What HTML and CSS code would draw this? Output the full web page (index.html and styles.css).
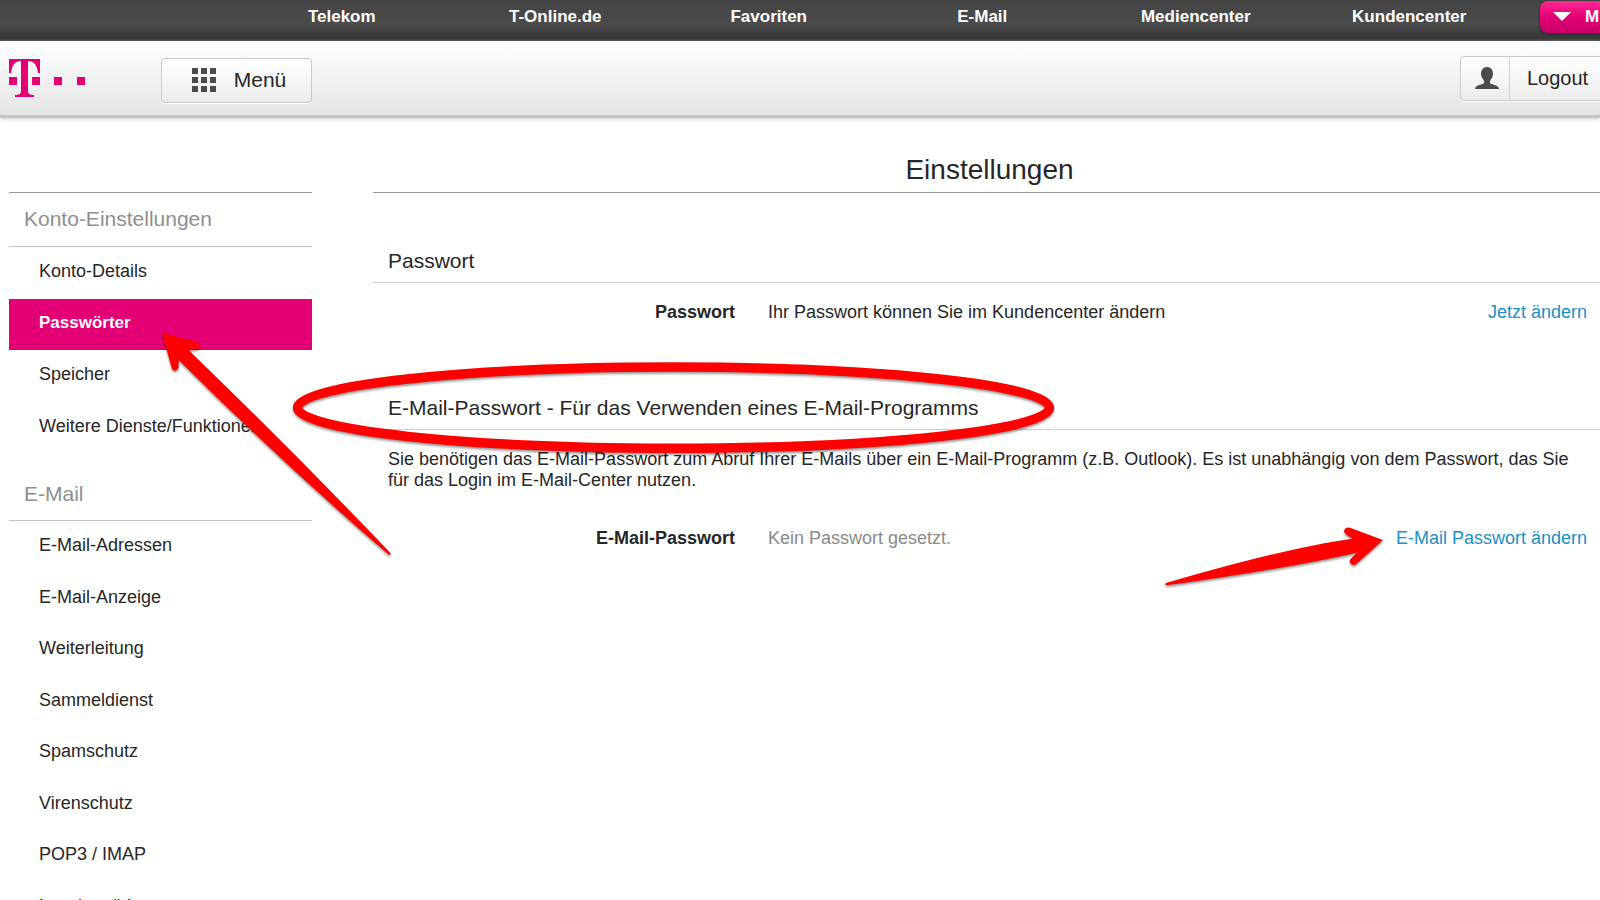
FILE: index.html
```html
<!DOCTYPE html>
<html lang="de">
<head>
    <meta charset="UTF-8">
    <meta name="viewport" content="width=device-width, initial-scale=1.0">
    <title>Einstellungen</title>
    <link rel="stylesheet" href="styles.css">
</head>
<body>
    <nav class="topbar">
        <a href="#">Telekom</a>
        <a href="#">T-Online.de</a>
        <a href="#">Favoriten</a>
        <a href="#">E-Mail</a>
        <a href="#">Mediencenter</a>
        <a href="#">Kundencenter</a>
        <button class="more">
            <svg width="18" height="10" viewBox="0 0 18 10"><path d="M0 0H18L9 9Z" fill="#fff"/></svg>
            <span>M</span>
        </button>
    </nav>
    <header class="header">
        <a href="#" class="logo" aria-label="Telekom">
            <svg width="77" height="39" viewBox="0 0 77 39" fill="#e20074">
                <path d="M0 0H31V14H29C28 6 25 2 19 2V32C19 35 21 36 25 36V38H6V36C10 36 12 35 12 32V2C6 2 3 6 2 14H0Z"/>
                <path d="M0 18H8V26H0ZM23 18H31V26H23ZM45 18H53V26H45ZM68 18H76V26H68Z"/>
            </svg>
        </a>
        <button class="btn menu-btn">
            <svg width="25" height="25" viewBox="0 0 25 25" fill="#4b4b4b">
                <path d="M0 0H6V6H0ZM9 0H15V6H9ZM18 0H24V6H18ZM0 9H6V15H0ZM9 9H15V15H9ZM18 9H24V15H18ZM0 18H6V24H0ZM9 18H15V24H9ZM18 18H24V24H18Z"/>
            </svg>
            <span>Menü</span>
        </button>
        <div class="account">
            <button class="btn user-btn" aria-label="Benutzer">
                <svg width="24" height="22" viewBox="0 0 24 22" fill="#4b4b4b">
                    <path d="M12 0C16 0 18 3 18 7C18 10 16 12 15 14V16C17 18 24 18 24 22H0C0 18 7 18 9 16V14C8 12 6 10 6 7C6 3 8 0 12 0Z"/>
                </svg>
            </button>
            <button class="btn logout-btn">Logout</button>
        </div>
    </header>

    <div class="page">
        <aside class="sidebar">
            <h2 class="first">Konto-Einstellungen</h2>
            <ul class="konto">
                <li><a href="#">Konto-Details</a></li>
                <li class="active"><a href="#">Passwörter</a></li>
                <li><a href="#">Speicher</a></li>
                <li><a href="#">Weitere Dienste/Funktionen</a></li>
            </ul>
            <h2>E-Mail</h2>
            <ul class="mail">
                <li><a href="#">E-Mail-Adressen</a></li>
                <li><a href="#">E-Mail-Anzeige</a></li>
                <li><a href="#">Weiterleitung</a></li>
                <li><a href="#">Sammeldienst</a></li>
                <li><a href="#">Spamschutz</a></li>
                <li><a href="#">Virenschutz</a></li>
                <li><a href="#">POP3 / IMAP</a></li>
                <li><a href="#">Lesebestätigung</a></li>
            </ul>
        </aside>
        <main class="content">
            <h1>Einstellungen</h1>
            <section class="password">
                <h3>Passwort</h3>
                <div class="row">
                    <strong>Passwort</strong>
                    <span>Ihr Passwort können Sie im Kundencenter ändern</span>
                    <a href="#">Jetzt ändern</a>
                </div>
            </section>
            <section>
                <h3>E-Mail-Passwort - Für das Verwenden eines E-Mail-Programms</h3>
                <p>Sie benötigen das E-Mail-Passwort zum Abruf Ihrer E-Mails über ein E-Mail-Programm (z.B. Outlook). Es ist unabhängig von dem Passwort, das Sie für das Login im E-Mail-Center nutzen.</p>
                <div class="row">
                    <strong>E-Mail-Passwort</strong>
                    <span class="empty">Kein Passwort gesetzt.</span>
                    <a href="#">E-Mail Passwort ändern</a>
                </div>
            </section>
        </main>
    </div>

    <!-- red markers on top of the page -->
    <svg class="marks" width="1600" height="620" viewBox="0 0 1600 620">
        <ellipse cx="673.5" cy="407.7" rx="376" ry="40.6" fill="none" stroke="#f00" stroke-width="9.5"/>
        <path fill="#f00" d="M162 333L197 342Q202 345 199 348.500L189 350.500Q292 450 390.500 553Q391 555.500 388.500 554.500Q280 461 178.700 360L178.500 368Q176 373 172 369Z"/>
        <path fill="#f00" d="M1383 540L1350 527.700Q1345 527 1344 531Q1344 534 1352.700 538.700Q1290 547 1166 583Q1164 585 1167 585.300Q1290 568 1356.700 552.700L1351 558.500Q1348 562 1352 564.500Q1355 566 1358 562.500Z"/>
    </svg>
</body>
</html>
```
FILE: styles.css
```css
* {
    box-sizing: border-box;
}
body {
    margin: 0;
    background-color: #fff;
    color: #262626;
    font-family: "Liberation Sans", Arial, sans-serif;
    font-size: 18px;
    overflow-x: hidden;
    position: relative;
}
a {
    color: inherit;
    text-decoration: none;
}
button {
    font-family: inherit;
    cursor: pointer;
}
h1, h2, h3, p, ul {
    margin: 0;
    padding: 0;
    font-weight: normal;
}
.topbar {
    display: grid;
    grid-template-columns: repeat(6, 1fr) 84px;
    align-items: start;
    height: 41px;
    padding-left: 235px;
    background: linear-gradient(#444, #4b4b4b 60%, #303030);
    color: #fff;
    font-size: 17px;
    font-weight: bold;
    line-height: 33px;
    text-align: center;
    overflow: hidden;
}
.more {
    display: flex;
    align-items: center;
    gap: 14px;
    width: 120px;
    height: 32px;
    margin: 1px 0 0 24px;
    padding: 0 13px;
    border: none;
    border-radius: 8px;
    background: linear-gradient(#ff2a94, #e20074 50%, #c80068);
    box-shadow: 0 1px 3px #222;
    color: #fff;
    font-size: 17px;
    font-weight: bold;
}
.header {
    display: flex;
    align-items: center;
    height: 77px;
    padding-left: 9px;
    border-bottom: 3px solid #c4c4c4;
    background: linear-gradient(#fff, #e4e4e4);
    box-shadow: 0 1px 4px #ccc;
}
.logo {
    display: flex;
    width: 152px;
}
.btn {
    display: flex;
    align-items: center;
    justify-content: center;
    height: 45px;
    padding: 0;
    border: 1px solid #c8c8c8;
    border-radius: 4px;
    background: linear-gradient(#fff, #ececec);
    box-shadow: 0 1px 1px #fff;
    color: #262626;
}
.menu-btn {
    gap: 17px;
    width: 151px;
    margin-top: 4px;
    padding-left: 5px;
    font-size: 21px;
}
.account {
    display: flex;
    margin-left: auto;
}
.user-btn {
    width: 50px;
    padding-left: 3px;
    border-radius: 4px 0 0 4px;
}
.logout-btn {
    width: 90px;
    padding-left: 5px;
    border-left: none;
    border-right: none;
    border-radius: 0;
    font-size: 20px;
}
.page {
    display: flex;
    gap: 61px;
    padding-left: 9px;
}
.sidebar {
    flex: none;
    width: 303px;
    padding-top: 74px;
}
.sidebar h2 {
    height: 53px;
    padding-left: 15px;
    border-bottom: 1px solid #c0c0c0;
    color: #8f8f8f;
    font-size: 21px;
    line-height: 52px;
}
.sidebar .first {
    height: 55px;
    border-top: 1px solid #999;
}
.sidebar ul {
    display: grid;
    grid-auto-rows: 1fr;
    list-style: none;
}
.konto {
    height: 206px;
    margin-bottom: 15px;
}
.mail {
    height: 412px;
}
.sidebar li {
    display: flex;
    align-items: center;
    padding: 0 0 2px 30px;
}
.sidebar .active {
    background-color: #e20074;
    color: #fff;
    font-size: 17px;
    font-weight: bold;
}
.content {
    flex: 1;
    padding-top: 32px;
}
.content h1 {
    height: 43px;
    padding-left: 6px;
    border-bottom: 1px solid #999;
    font-size: 28px;
    line-height: 40px;
    text-align: center;
}
.content h3 {
    height: 44px;
    padding-left: 15px;
    border-bottom: 1px solid #ccc;
    font-size: 21px;
    line-height: 44px;
}
.password {
    padding-top: 46px;
    padding-bottom: 63px;
}
.row {
    display: grid;
    grid-template-columns: 362px 1fr auto;
    column-gap: 33px;
    padding-right: 13px;
    line-height: 21px;
}
.row strong {
    text-align: right;
}
.row a {
    color: #1b8fc4;
}
.content h3 + .row {
    margin-top: 19px;
}
.content p {
    padding: 19px 15px 0;
    line-height: 21px;
}
.content p + .row {
    margin-top: 37px;
}
.empty {
    color: #8a8a8a;
}
.marks {
    position: absolute;
    top: 0;
    left: 0;
    pointer-events: none;
    filter: drop-shadow(0 2px 1px rgba(0, 0, 0, 0.4));
}
```
